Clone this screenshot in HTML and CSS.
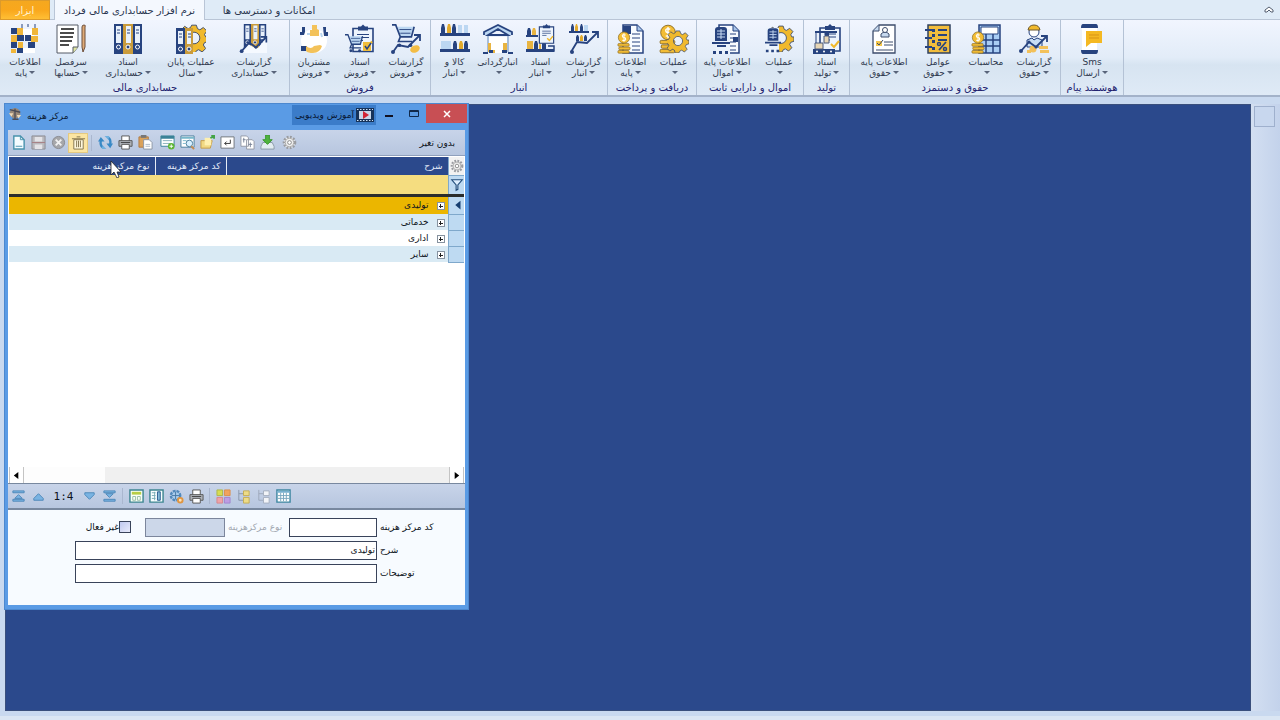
FILE: index.html
```
<!DOCTYPE html>
<html lang="fa">
<head>
    <meta charset="UTF-8">
    <meta name="viewport" content="width=device-width, initial-scale=1.0">
    <title>نرم افزار حسابداری مالی فرداد</title>
    <link rel="stylesheet" href="styles.css">
</head>
<body>
    <!-- shared icon parts -->
    <svg class="defs" aria-hidden="true">
        <symbol id="binders" viewBox="0 0 28 30">
            <path fill="#27437f" d="M0 0h9v30H0zM19 0h9v30h-9z"/><path fill="#c99b3c" d="M9 0h10v30H9z"/>
            <path fill="#e9f1fb" d="M2 2h5v17H2zM12 2h5v17h-5zM21 2h5v17h-5z"/>
            <path stroke="#27437f" d="M3 6h3M3 9h3M13 6h3M13 9h3M22 6h3M22 9h3"/>
            <g fill="#27437f" stroke="#fff"><circle cx="4.500" cy="23" r="2"/><circle cx="14" cy="23" r="2"/><circle cx="23.500" cy="23" r="2"/></g>
        </symbol>
        <symbol id="gear" viewBox="0 0 24 24">
            <path fill="#f0b92c" stroke="#3b4a6b" stroke-width=".8" fill-rule="evenodd" d="M10 1h4l1 3 2 1 3-2 3 3-2 3 1 2 2 0v4l-3 1-1 2 2 3-3 3-3-2-2 1-1 2h-4l-1-3-2-1-3 2-3-3 2-3-1-2-2 0v-4l3-1 1-2-2-3 3-3 3 2 2-1zM12 7a5 5 0 1 0 0 10a5 5 0 1 0 0-10z"/>
        </symbol>
        <symbol id="doc" viewBox="0 0 22 30">
            <path fill="#f8fbff" stroke="#27437f" stroke-width="1.500" d="M1 1h14l6 6v22H1z"/><path fill="#a9c5ea" stroke="#27437f" d="M15 1v6h6"/>
            <path stroke="#27437f" stroke-width="1.200" d="M10 10h8M10 14h8M10 18h8M10 22h8M10 26h8"/>
        </symbol>
        <symbol id="clip" viewBox="0 0 22 28">
            <path fill="#eef5fd" stroke="#27437f" stroke-width="1.600" d="M1 4h20v23H1z"/><path fill="#27437f" d="M6 2h3l2-2 2 2h3v4H6z"/>
            <path stroke="#f0b92c" stroke-width="2" fill="none" d="M12 20l3 3 5-6"/>
            <path stroke="#27437f" d="M5 10h12M5 13h12M5 16h6"/>
        </symbol>
        <symbol id="cart" viewBox="0 0 26 26">
            <path fill="#bcd7f2" d="M6 3h17l-3 11H9z"/>
            <path fill="none" stroke="#27437f" stroke-width="1.800" d="M0 1h4l5 13h12l3-11M9 14l-2 5h15"/><path stroke="#27437f" d="M8 6h13M9 10h11"/>
            <g fill="#27437f"><circle cx="8" cy="23" r="2"/><circle cx="20" cy="23" r="2"/></g>
        </symbol>
        <symbol id="coin" viewBox="0 0 16 30">
            <g fill="#f3bd35" stroke="#8a6a20" stroke-width=".8"><rect x="1" y="26" width="13" height="3" rx="1"/><rect x="2" y="22" width="13" height="3" rx="1"/><rect x="1" y="18" width="13" height="3" rx="1"/><circle cx="8" cy="11" r="6.500"/></g>
            <path fill="none" stroke="#fff" stroke-width="1.200" d="M10 8q-4-1-4 1t2 2 2 2-4 1M8 6v10"/>
        </symbol>
        <symbol id="arrow" viewBox="0 0 30 20">
            <path fill="none" stroke="#27437f" stroke-width="1.800" d="M2 17l8-9 7 5 11-11M22 2h6v6"/><circle cx="2" cy="17" r="2" fill="#27437f"/><circle cx="10" cy="8" r="1.500" fill="#27437f"/><circle cx="17" cy="13" r="1.500" fill="#27437f"/>
        </symbol>
        <symbol id="hat" viewBox="0 0 18 30">
            <path fill="#27437f" d="M3 17V6q0-3 3-3h6q3 0 3 3v11zM0 18h18v2H0zM5 21h9v2H5zM1 27h3v3H1zM7 27h3v3H7zM13 27h3v3h-3z"/><path stroke="#c7daf3" fill="none" d="M5 7h8M5 10h8M5 13h8M9 5v10"/>
        </symbol>
        <symbol id="cog" viewBox="0 0 16 16">
            <circle cx="8" cy="8" r="6" fill="#e8e8e8" stroke="#9a9ca1" stroke-width="2.500" stroke-dasharray="2 1.500"/><circle cx="8" cy="8" r="4.500" fill="#eee" stroke="#aaa"/><circle cx="8" cy="8" r="2" fill="#fff" stroke="#888"/>
        </symbol>
        <symbol id="printer" viewBox="0 0 16 16">
            <path fill="#fff" stroke="#555" d="M4 1h8v6H4z"/><path fill="#aeb2b8" stroke="#555" d="M1 6h14v6H1z"/><path fill="#fff" stroke="#555" d="M4 10h8v5H4z"/><path stroke="#444" d="M3 8h10"/>
        </symbol>
    </svg>

    <header class="ribbon">
        <nav class="tabs">
            <button class="tab tab-tools">ابزار</button>
            <button class="tab tab-active">نرم افزار حسابداری مالی فرداد</button>
            <button class="tab tab-access">امکانات و دسترسی ها</button>
            <button class="collapse" aria-label="بستن نوار"><svg viewBox="0 0 10 8"><path fill="#fff" stroke="#555f70" d="M1 4l4-3 4 3v2H7L5 4 3 6H1z"/></svg></button>
        </nav>

        <div class="groups">
            <section class="group first">
                <div class="items">
                    <button class="cmd small"><svg viewBox="0 0 30 30"><path fill="#fff" d="M12 5h12v8H12zM12 24h13v5H12z"/><g fill="#27437f"><path d="M1 4h6v6H1zM7 11h7v6H7zM1 18h6v6H1zM18 18h7v6h-7zM15 11h6v6h-6zM7 24h6v5H7z"/></g><g fill="#f0b63a"><path d="M7 4h6v7H7zM1 11h6v7H1zM22 4h6v7h-6zM21 12h7v6h-7zM8 18h5v6H8zM1 25h5v4H1z"/></g><path stroke="#27437f" d="M12 0v4M18 0v3M25 0v4"/></svg><span>اطلاعات</span><span class="drop">پایه</span></button>
                    <button class="cmd small"><svg viewBox="0 0 30 30"><path fill="#fff" stroke="#555b66" d="M1 1h21v22l-5 6H1z"/><path fill="#dfe5a0" stroke="#555b66" d="M17 29v-6h5"/><path stroke="#111" stroke-width="1.500" d="M5 5h13M4 9h14M4 13h13M4 17h12M4 21h9"/><path fill="#dfaa76" stroke="#6c4e3a" d="M26 3q0-2 2-2t1 2v20l-2 5-1-5z"/></svg><span>سرفصل</span><span class="drop">حسابها</span></button>
                    <button class="cmd large"><svg viewBox="0 0 30 30"><use href="#binders" x="1" width="28" height="30"/></svg><span>اسناد</span><span class="drop">حسابداری</span></button>
                    <button class="cmd medium"><svg viewBox="0 0 30 30"><use href="#gear" x="4" y="0" width="28" height="28"/><path fill="#27437f" d="M0 4h17v26H0z"/><path fill="#c99b3c" d="M9 4h8v26H9z"/><path fill="#e9f1fb" d="M2 7h5v13H2zM11 7h4v13h-4z"/><path stroke="#27437f" d="M3 10h3M3 13h3M12 10h3M12 13h3"/><g fill="#27437f" stroke="#fff"><circle cx="4.500" cy="25" r="2"/><circle cx="13" cy="25" r="2"/></g></svg><span>عملیات پایان</span><span class="drop">سال</span></button>
                    <button class="cmd large"><svg viewBox="0 0 30 30"><use href="#binders" x="4" width="24" height="24"/><path fill="#f5f9ff" d="M2 29l7-9 9 5 10-12v16z"/><use href="#arrow" x="0" y="11" width="30" height="19"/></svg><span>گزارشات</span><span class="drop">حسابداری</span></button>
                </div>
                <h2>حسابداری مالی</h2>
            </section>
            <section class="group">
                <div class="items">
                    <button class="cmd small"><svg viewBox="0 0 30 30"><ellipse cx="15" cy="17" rx="13" ry="12" fill="#fff"/><path fill="#27437f" d="M3 3h3v5l-1 3H1V8h2zM24 3h3v5h2v4h-4zM2 22h6v5H2z"/><path fill="#f3c25a" d="M13 1h5v4l2 1v6h-9V6h2zM7 22q5 4 8 0l6-1 2 1q-2 7-9 7-5 0-7-2z"/><path stroke="#b9d5ef" stroke-width="2" d="M22 9l1 4M8 10l3 0"/></svg><span>مشتریان</span><span class="drop">فروش</span></button>
                    <button class="cmd small"><svg viewBox="0 0 30 30"><use href="#clip" x="7" width="22" height="29"/><use href="#cart" x="0" y="9" width="19" height="21"/><path fill="#f0bd3c" d="M18 18h8v9h-8z"/><path fill="none" stroke="#27437f" stroke-width="1.500" d="M20 22l2 3 4-6"/></svg><span>اسناد</span><span class="drop">فروش</span></button>
                    <button class="cmd small"><svg viewBox="0 0 30 30"><use href="#cart" x="0" y="0" width="26" height="24"/><path fill="none" stroke="#27437f" stroke-width="1.800" d="M2 28l5-7 10 2 12-12M23 11h6v6"/><circle cx="2" cy="28" r="2" fill="#27437f"/><ellipse cx="24" cy="25" rx="5" ry="3.500" fill="#f3bd45" transform="rotate(-25 24 25)"/></svg><span>گزارشات</span><span class="drop">فروش</span></button>
                </div>
                <h2>فروش</h2>
            </section>
            <section class="group stock">
                <div class="items">
                    <button class="cmd tiny"><svg viewBox="0 0 30 30"><g fill="#27437f"><path d="M1 9V4l1-4h2l1 4v5zM12 9V4l1-4h2l1 4v5zM0 9h30v3H0zM13 25v-5l1-3h2l1 3v5zM24 25v-5l1-3h2l1 3v5zM0 25h30v3H0z"/></g><path fill="#e2aa2c" d="M7 9V4l1-4h2l1 4v5zM19 25v-5l1-3h2l1 3v5z"/><path fill="#bcd7f2" d="M18 9V1h4v8zM24 9V1h4v8zM1 17h10v8H1z"/></svg><span>کالا و</span><span class="drop">انبار</span></button>
                    <button class="cmd tiny"><svg viewBox="0 0 30 30"><path fill="#bcd7f2" stroke="#27437f" stroke-width="1.800" d="M1 11V8l14-7 14 7v3M5 11h20L15 5z"/><path fill="#fff" d="M6 13h18v16H6z"/><path stroke="#91acd0" stroke-width="1.500" d="M5 12v16M25 12v16"/><path fill="#e8b441" d="M5 19h3v9H5zM20 19h4v8h-4zM9 26h3v3H9z"/><path fill="#27437f" d="M6 26h4v3H6zM19 26h5v3h-5zM0 28h5v2H0zM25 28h5v2h-5z"/></svg><span>انبارگردانی</span><span class="drop"></span></button>
                    <button class="cmd tiny"><svg viewBox="0 0 30 30"><g fill="#27437f"><path d="M1 11V7l1-3h2l1 3v4zM0 11h12v2H0zM8 25v-5l1-3h2l1 3v5zM16 25v-5l1-3h2l1 3v5zM0 25h28v3H0z"/></g><path fill="#e8b441" d="M6 11V7l1-3h2l1 3v4zM1 17h6v8H1zM13 25v-4l1-3 1 3v4z"/><path fill="none" stroke="#27437f" stroke-width="1.500" d="M22 22h6v5h-6"/><use href="#clip" x="12" width="17" height="20"/></svg><span>اسناد</span><span class="drop">انبار</span></button>
                    <button class="cmd tiny"><svg viewBox="0 0 30 30"><g fill="#27437f"><path d="M2 7V3l1-3h1l1 3v4zM11 7V3l1-3h1l1 3v4zM0 7h20v2H0zM7 17v-4l1-2h1l1 2v4zM15 17v-4l1-2h1l1 2v4z"/></g><path fill="#e2aa2c" d="M6 7V3l1-3h1l1 3v4zM11 17v-4l1-2h1l1 2v4z"/><path fill="#bcd7f2" d="M15 7V1h4v6z"/><path fill="none" stroke="#27437f" stroke-width="1.800" d="M2 28l6-10 10 1L29 8M23 8h6v6"/><circle cx="3" cy="28" r="2" fill="#27437f"/></svg><span>گزارشات</span><span class="drop">انبار</span></button>
                </div>
                <h2>انبار</h2>
            </section>
            <section class="group">
                <div class="items">
                    <button class="cmd tiny"><svg viewBox="0 0 30 30"><use href="#doc" x="6" width="22" height="30"/><path fill="#27437f" d="M7 2h8v8H7z"/><use href="#coin" x="1" y="4" width="14" height="26"/></svg><span>اطلاعات</span><span class="drop">پایه</span></button>
                    <button class="cmd tiny"><svg viewBox="0 0 30 30"><use href="#coin" x="0" y="-4" width="18" height="34"/><use href="#gear" x="8" y="5" width="22" height="24"/></svg><span>عملیات</span><span class="drop"></span></button>
                </div>
                <h2>دریافت و پرداخت</h2>
            </section>
            <section class="group">
                <div class="items">
                    <button class="cmd medium"><svg viewBox="0 0 30 30"><use href="#doc" x="6" width="22" height="30"/><path fill="#eaf2fb" d="M4 5h14v26H4z"/><path fill="#27437f" d="M21 13h5v5h-5z"/><use href="#hat" x="0" y="0" width="18" height="30"/></svg><span>اطلاعات پایه</span><span class="drop">اموال</span></button>
                    <button class="cmd small"><svg viewBox="0 0 30 30"><use href="#gear" x="4" y="0" width="26" height="28"/><path fill="#eaf2fb" d="M2 4h13v26H2z"/><use href="#hat" x="1" y="0" width="16" height="30"/></svg><span>عملیات</span><span class="drop"></span></button>
                </div>
                <h2>اموال و دارایی ثابت</h2>
            </section>
            <section class="group">
                <div class="items">
                    <button class="cmd tiny"><svg viewBox="0 0 30 30"><use href="#clip" x="7" width="22" height="28"/><path fill="#27437f" d="M3 7h22v2H3zM13 8h4v4h-4zM1 25h22v5H1z"/><path fill="#e7d6b5" stroke="#4a5b7c" d="M12 12h5v7h-5zM3 19h8v6H3z"/><path stroke="#27437f" d="M4 8v11"/><g fill="#fff"><circle cx="5" cy="27.500" r="1"/><circle cx="12" cy="27.500" r="1"/><circle cx="19" cy="27.500" r="1"/></g></svg><span>اسناد</span><span class="drop">تولید</span></button>
                </div>
                <h2>تولید</h2>
            </section>
            <section class="group spaced">
                <div class="items">
                    <button class="cmd medium"><svg viewBox="0 0 30 30"><path fill="#fff" stroke="#3c4c6c" stroke-width="1.300" d="M10 1h16v28H4V7z"/><path fill="#c7d9ef" stroke="#3c4c6c" d="M4 7h6V1M12 13v-3q4-4 8 0v3z"/><circle cx="16" cy="6" r="2.500" fill="#fff" stroke="#3c4c6c"/><path fill="#f5c74b" d="M7 17h6v5H7z"/><path fill="none" stroke="#3c4c6c" d="M8 19l2 2 4-5M15 18h9M15 21h9M7 26h17"/></svg><span>اطلاعات پایه</span><span class="drop">حقوق</span></button>
                    <button class="cmd small"><svg viewBox="0 0 30 30"><path fill="#f2bd3d" stroke="#31415f" stroke-width="1.500" d="M5 1h22v28H5z"/><path stroke="#27437f" stroke-width="1.800" d="M2 6h7M2 14h7M2 23h7M15 6h9M15 11h9M15 16h9M16 26l7-8"/><path fill="#27437f" d="M9 5h3v3H9zM9 10h3v3H9zM9 16h3v3H9zM9 23h3v3H9z"/><g fill="none" stroke="#27437f" stroke-width="1.500"><circle cx="16" cy="20" r="1.500"/><circle cx="22" cy="25" r="1.500"/></g></svg><span>عوامل</span><span class="drop">حقوق</span></button>
                    <button class="cmd small"><svg viewBox="0 0 30 30"><path fill="#a9cdf4" stroke="#27437f" stroke-width="1.500" d="M8 1h21v28H8z"/><path fill="#fff" stroke="#27437f" d="M10 3h17v7H10z"/><path stroke="#27437f" stroke-width="1.500" d="M15 10v19M22 10v19M9 16h20M9 22h20"/><use href="#coin" x="0" y="4" width="14" height="26"/></svg><span>محاسبات</span><span class="drop"></span></button>
                    <button class="cmd small"><svg viewBox="0 0 30 30"><circle cx="15" cy="8" r="5" fill="#fff" stroke="#27437f"/><path fill="#f0b92c" stroke="#6d5930" d="M9 6q1-5 6-5t6 5z"/><path fill="#c8def5" stroke="#27437f" d="M8 23v-7l5-2 2 2 3-2 5 2v7z"/><g fill="#f3c15a"><circle cx="14" cy="25" r="3.500"/><path d="M20 22h9v3h-9zM21 26h9v3h-9zM8 26h4v3H8z"/></g><use href="#arrow" y="10" width="30" height="20"/></svg><span>گزارشات</span><span class="drop">حقوق</span></button>
                </div>
                <h2>حقوق و دستمزد</h2>
            </section>
            <section class="group sms">
                <div class="items">
                    <button class="cmd small"><svg viewBox="0 0 30 30"><path fill="#fff" d="M5 4h15v22H5z"/><path fill="#27437f" d="M6 0h13q2 0 2 4H4q0-4 2-4zM4 26h17q0 4-2 4H6q-2 0-2-4z"/><path fill="#f4b822" d="M9 7h16v12H14l-5 4z"/><path stroke="#d99315" d="M12 11h10M12 14h10"/></svg><span>Sms</span><span class="drop">ارسال</span></button>
                </div>
                <h2>هوشمند پیام</h2>
            </section>
        </div>
    </header>

    <main class="workspace">
        <div class="desktop">
            <div class="window">
                <div class="titlebar">
                    <svg class="app-icon" viewBox="0 0 16 16"><circle cx="8" cy="7" r="6" fill="#987"/><path stroke="#4b4b55" stroke-width="1.500" d="M2 3l12 3M8 2v11M5 14h7"/><path fill="#eed9b8" d="M1 7h5l-2 4zM10 9h5l-3 4z"/></svg>
                    <h1>مرکز هزینه</h1>
                    <button class="video"><svg viewBox="0 0 18 14"><path fill="#173258" d="M0 0h18v14H0z"/><path stroke="#cfe2f8" stroke-dasharray="1.500 1.500" d="M1 1.500h16M1 12.500h16"/><path fill="#c8d6e8" d="M3 3h12v8H3z"/><path fill="#d02435" d="M7 3l6 4-6 4z"/></svg><span>آموزش ویدیویی</span></button>
                    <button class="win-btn" aria-label="کوچک"><svg viewBox="0 0 10 10"><path stroke="#112" stroke-width="2" d="M1 7h8"/></svg></button>
                    <button class="win-btn" aria-label="بزرگ"><svg viewBox="0 0 10 10"><path fill="none" stroke="#112a4c" d="M.5 1.500h9v6h-9z"/><path stroke="#112a4c" d="M0 2.500h10"/></svg></button>
                    <button class="win-btn close" aria-label="بستن"><svg viewBox="0 0 10 10"><path stroke="#fff" stroke-width="1.500" d="M2 2l6 6M8 2l-6 6"/></svg></button>
                </div>

                <div class="toolbar">
                    <button aria-label="جدید"><svg viewBox="0 0 16 16"><path fill="#f5fcff" stroke="#4992ad" stroke-width="1.500" d="M3 1h7l4 4v10H3z"/><path fill="none" stroke="#4992ad" d="M10 1v4h4M5 12h7"/></svg></button>
                    <button aria-label="ذخیره"><svg viewBox="0 0 16 16"><path fill="#b9b8bd" stroke="#8d8d94" d="M1 1h14v14H1z"/><path fill="#e4e3e7" d="M4 2h8v5H4zM4 10h8v5H4z"/><path stroke="#a57e83" d="M1 8h14"/></svg></button>
                    <button aria-label="انصراف"><svg viewBox="0 0 16 16"><circle cx="8" cy="8" r="6.500" fill="#a6a7ab" stroke="#898a90"/><path stroke="#f1f1f1" stroke-width="2" d="M5 5l6 6M11 5l-6 6"/></svg></button>
                    <button class="hot" aria-label="حذف"><svg viewBox="0 0 16 16"><path fill="#fff8dd" stroke="#81734e" d="M3 5h10v10H3z"/><path stroke="#81734e" d="M1 4h14M6 2h4M6 6v7M8 6v7M10 6v7"/></svg></button>
                    <i class="sep"></i>
                    <button aria-label="بازخوانی"><svg viewBox="0 0 16 16"><path fill="none" stroke="#3989c6" stroke-width="2.500" d="M5 13Q2 11 3 6M11 3q3 2 2 7"/><path fill="#3989c6" d="M0 7l3-5 4 5zM16 9l-3 5-4-5z"/><path fill="#6fb0de" d="M5 11l4 4H4zM11 5L7 1h5z"/></svg></button>
                    <button aria-label="چاپ"><svg viewBox="0 0 16 16"><use href="#printer"/></svg></button>
                    <button aria-label="چسباندن"><svg viewBox="0 0 16 16"><path fill="#d9a15a" stroke="#b17a43" d="M1 2h10v11H1z"/><path fill="#777" d="M3 0h6v3H3z"/><path fill="#fff" stroke="#8b95a5" d="M6 5h6l3 3v7H6z"/><path stroke="#a9b6c4" d="M8 10h5M8 12h5"/></svg></button>
                    <i class="gap"></i>
                    <button aria-label="افزودن"><svg viewBox="0 0 16 16"><path fill="#fff" stroke="#3a8298" d="M1 1h14v11H1z"/><path fill="#3a8298" d="M1 1h14v3H1z"/><path stroke="#85afba" d="M3 6h10M3 9h8"/><circle cx="12" cy="12" r="3.500" fill="#5bb432"/><path stroke="#fff" d="M10 12h4M12 10v4"/></svg></button>
                    <button aria-label="جستجو"><svg viewBox="0 0 16 16"><path fill="#fff" stroke="#497d9c" d="M1 1h14v12H1z"/><path stroke="#79b8cb" stroke-width="2" d="M1 3h14"/><path stroke="#79b8cb" d="M3 6h4M3 9h3"/><circle cx="10" cy="9" r="3.500" fill="#d8f0ff" stroke="#497d9c"/><path stroke="#c48b50" stroke-width="2" d="M12 12l3 3"/></svg></button>
                    <button aria-label="ارسال"><svg viewBox="0 0 16 16"><path fill="#f1d984" stroke="#c49c48" d="M1 6h12l-2 8H1z"/><path fill="#fff0af" d="M5 3h7v8H5z"/><path fill="none" stroke="#42a345" stroke-width="2" d="M11 3l3-1M12 1h3v3"/></svg></button>
                    <button aria-label="ورود"><svg viewBox="0 0 16 16"><path fill="#fff" stroke="#6f747b" d="M1 2h14v12H1z"/><path fill="none" stroke="#333" d="M11 5v4H5M7 7L5 9l2 2"/></svg></button>
                    <button aria-label="رونوشت"><svg viewBox="0 0 16 16"><g fill="#fff" stroke="#9399a5"><path d="M1 1h6l2 2v9H1zM7 5h6l2 2v8H7z"/></g><path stroke="#778296" d="M3 5h3M4 3v5M9 10h4M11 8v5"/></svg></button>
                    <button aria-label="دریافت"><svg viewBox="0 0 16 16"><path fill="#e3edf1" stroke="#8b9aa6" d="M3 8h10l2 4v3H1v-3z"/><path fill="#4fb33e" stroke="#37962b" d="M6 0h4v5h3l-5 5-5-5h3z"/></svg></button>
                    <i class="gap"></i>
                    <button aria-label="تنظیمات"><svg viewBox="0 0 16 16"><use href="#cog"/></svg></button>
                    <span class="state">بدون تغیر</span>
                </div>

                <div class="grid-box">
                    <table class="grid" dir="rtl">
                        <colgroup><col class="c-mark"><col class="c-desc"><col class="c-code"><col></colgroup>
                        <thead>
                            <tr>
                                <th class="mark"><svg viewBox="0 0 16 16"><use href="#cog"/></svg></th>
                                <th>شرح</th>
                                <th>کد مرکز هزینه</th>
                                <th>نوع مرکز هزینه</th>
                            </tr>
                            <tr class="filter">
                                <td class="mark"><svg viewBox="0 0 16 16"><path fill="#dceeff" stroke="#234e7b" stroke-width="1.300" d="M2 2h12L9 8v5l-2 1V8z"/></svg></td>
                                <td colspan="3"></td>
                            </tr>
                        </thead>
                        <tbody>
                            <tr class="selected"><td class="mark"><svg viewBox="0 0 16 16"><path fill="#173f70" d="M12 3v10L6 8z"/></svg></td><td colspan="3"><button class="plus" aria-label="باز کردن"></button>تولیدی</td></tr>
                            <tr class="alt"><td class="mark"></td><td colspan="3"><button class="plus" aria-label="باز کردن"></button>خدماتی</td></tr>
                            <tr><td class="mark"></td><td colspan="3"><button class="plus" aria-label="باز کردن"></button>اداری</td></tr>
                            <tr class="alt"><td class="mark"></td><td colspan="3"><button class="plus" aria-label="باز کردن"></button>سایر</td></tr>
                        </tbody>
                    </table>
                    <div class="scroll">
                        <button aria-label="چپ"><svg viewBox="0 0 10 10"><path d="M7 1v8L2 5z"/></svg></button>
                        <div class="track"><div class="thumb"></div></div>
                        <button aria-label="راست"><svg viewBox="0 0 10 10"><path d="M3 1v8l5-4z"/></svg></button>
                    </div>
                </div>

                <div class="toolbar navigator">
                    <button aria-label="اولین"><svg viewBox="0 0 16 16"><path fill="#79b3e2" stroke="#4e87b9" d="M2 2h12v2H2zM8 6l4 4H4zM2 11h12v2H2z"/></svg></button>
                    <button aria-label="قبلی"><svg viewBox="0 0 16 16"><path fill="#79b3e2" stroke="#4e87b9" d="M8 5l5 5v2H3v-2z"/></svg></button>
                    <span class="count">1:4</span>
                    <button aria-label="بعدی"><svg viewBox="0 0 16 16"><path fill="#79b3e2" stroke="#4e87b9" d="M3 4h10v2l-5 5-5-5z"/></svg></button>
                    <button aria-label="آخرین"><svg viewBox="0 0 16 16"><path fill="#79b3e2" stroke="#4e87b9" d="M2 2h12v2H2zM4 5h8L8 9zM2 11h12v2H2z"/></svg></button>
                    <i class="sep"></i>
                    <button aria-label="فرم"><svg viewBox="0 0 16 16"><path fill="#f9fff6" stroke="#3c8590" stroke-width="1.500" d="M1 1h14v13H1z"/><path fill="#b7ce45" d="M3 3h10v3H3z"/><path fill="none" stroke="#98bca5" d="M4 8h3v4H4zM9 8h3v4H9z"/></svg></button>
                    <button aria-label="ستون"><svg viewBox="0 0 16 16"><path fill="#f9ffff" stroke="#3c8590" stroke-width="1.500" d="M1 1h14v13H1z"/><path stroke="#75abb4" d="M3 4h4M3 7h4M3 10h4M6 3v9"/><path fill="#83bad7" stroke="#24578b" d="M9 3h3v9H9z"/></svg></button>
                    <button aria-label="گزینه ها"><svg viewBox="0 0 16 16"><circle cx="7" cy="7" r="5" fill="#a9ccec" stroke="#5289bb" stroke-width="2.500" stroke-dasharray="3 1"/><path stroke="#4777a4" d="M3 7h8M7 3v8"/><circle cx="12" cy="12" r="2.500" fill="#ffe3b5" stroke="#df9542" stroke-width="2"/></svg></button>
                    <button aria-label="چاپ"><svg viewBox="0 0 16 16"><use href="#printer"/></svg></button>
                    <i class="sep"></i>
                    <button aria-label="کارت"><svg viewBox="0 0 16 16"><path fill="#d7dc52" stroke="#aeb64a" d="M1 1h6v6H1z"/><path fill="#f0a35f" stroke="#dc8e4b" d="M9 1h6v6H9z"/><path fill="#efa4a8" stroke="#d6868e" d="M1 9h6v6H1z"/><path fill="#bd9ee3" stroke="#a184ce" d="M9 9h6v6H9z"/></svg></button>
                    <button aria-label="درخت"><svg viewBox="0 0 16 16"><path fill="none" stroke="#8a96aa" d="M3 1v11h5M3 5h5"/><path fill="#eddc88" stroke="#c5ad52" d="M8 2h6v5H8zM8 9h6v6H8z"/></svg></button>
                    <button aria-label="بستن درخت"><svg viewBox="0 0 16 16"><path fill="none" stroke="#9ca7ba" d="M3 1v11h5M3 5h5"/><path fill="#f2f4f8" stroke="#a5afbf" d="M8 2h6v5H8zM8 9h6v6H8z"/></svg></button>
                    <button aria-label="جدول"><svg viewBox="0 0 16 16"><path fill="#fff" stroke="#3c85a0" stroke-width="1.500" d="M1 1h14v13H1z"/><path stroke="#79b0cf" stroke-width="2" d="M1 3h14"/><path stroke="#79a5be" d="M5 4v9M8 4v9M11 4v9M2 7h12M2 10h12"/></svg></button>
                </div>

                <form class="form" dir="rtl">
                    <div class="field">
                        <label class="name" for="code">کد مرکز هزینه</label>
                        <input class="short" type="text" id="code">
                        <label class="muted" for="kind">نوع مرکزهزینه</label>
                        <input class="kind" type="text" id="kind" disabled>
                        <div class="check">
                            <input type="checkbox" id="inactive">
                            <label for="inactive">غیر فعال</label>
                        </div>
                    </div>
                    <div class="field">
                        <label class="name" for="desc">شرح</label>
                        <input class="long" type="text" id="desc" value="تولیدی">
                    </div>
                    <div class="field">
                        <label class="name" for="notes">توضیحات</label>
                        <input class="long" type="text" id="notes">
                    </div>
                </form>
                <svg class="pointer" viewBox="0 0 12 18"><path fill="#fff" stroke="#222" stroke-width=".8" d="M1 1v14l3-3 3 6 2-1-2-5h4z"/></svg>
            </div>
        </div>
        <aside class="side"><button aria-label="پنل"></button></aside>
    </main>
</body>
</html>
```
FILE: styles.css
```
* {
    box-sizing: border-box;
}

body {
    margin: 0;
    height: 100vh;
    display: flex;
    flex-direction: column;
    overflow: hidden;
    background: #c9d9ef;
    font-family: "DejaVu Sans", Tahoma, sans-serif;
    font-size: 9px;
    color: #0c1220;
}

button,
input {
    font: inherit;
    color: inherit;
    margin: 0;
    padding: 0;
    border: 0;
    background: none;
}

h1,
h2 {
    margin: 0;
    font-size: 9px;
    font-weight: normal;
}

svg {
    display: block;
}

.defs {
    position: absolute;
    width: 0;
    height: 0;
}

/* Ribbon */
.tabs {
    display: flex;
    height: 20px;
    background: #dfebf7;
    border-bottom: 1px solid #b9c5d6;
}

.tab {
    height: 20px;
    direction: rtl;
    font-size: 10px;
    color: #2a3650;
    white-space: nowrap;
}

.tab-tools {
    width: 50px;
    color: #fff3cf;
    background: linear-gradient(#f5a81f, #f9a71c 50%, #ffbf35);
    border: 1px solid #dc9a2b;
}

.tab-active {
    width: 151px;
    margin-left: 4px;
    background: #f4f8fe;
    border: 1px solid #b9c5d6;
    border-width: 0 1px;
}

.tab-access {
    width: 128px;
}

.collapse {
    width: 22px;
    margin-left: auto;
}

.collapse svg {
    width: 10px;
    height: 8px;
    margin: auto;
}

.groups {
    display: flex;
    height: 77px;
    background: linear-gradient(#f1f5fe, #e2ecf8 50%, #d7e4f1 60%, #dfeaf6);
    border-bottom: 2px solid #a3b2c9;
}

.group {
    display: flex;
    flex-direction: column;
    padding: 4px 1px 0;
    border-right: 1px solid #b4c2d5;
}

.first {
    padding-left: 2px;
}

.stock {
    padding-left: 2px;
    padding-right: 2px;
}

.items {
    display: flex;
    flex: 1;
    justify-content: center;
}

.spaced .items {
    gap: 2px;
    padding: 0 2px 0 4px;
}

.sms {
    width: 63px;
}

.group h2 {
    height: 15px;
    line-height: 15px;
    direction: rtl;
    text-align: center;
    white-space: nowrap;
    font-size: 10px;
    color: #22226f;
}

.cmd {
    display: flex;
    flex-direction: column;
    align-items: center;
    direction: rtl;
    line-height: 11px;
    white-space: nowrap;
    color: #2f394e;
}

.cmd svg {
    width: 30px;
    height: 30px;
    margin-bottom: 3px;
}

.cmd.tiny { width: 43px; }
.cmd.small { width: 46px; }
.cmd.medium { width: 58px; }
.cmd.large { width: 68px; }

.drop::before {
    content: "";
    display: inline-block;
    margin-left: 2px;
    vertical-align: 2px;
    border: 3px solid transparent;
    border-top-color: #59647a;
    border-bottom: 0;
}

/* Work area */
.workspace {
    flex: 1;
    display: flex;
    padding: 7px 0 5px 5px;
    border-bottom: 4px solid #dbe6f3;
}

.desktop {
    flex: 1;
    position: relative;
    background: #2b498c;
    border: 1px solid #3a4f7c;
}

.side {
    width: 29px;
    padding: 2px 3px;
    background: linear-gradient(90deg, #d3dff1, #c3d2eb);
}

.side button {
    display: block;
    width: 21px;
    height: 21px;
    border: 1px solid #9fb0cd;
    background: #c8d7ee;
}

/* Window */
.window {
    position: absolute;
    left: -2px;
    top: -2px;
    width: 465px;
    padding: 0 3px 4px;
    background: #5a9be5;
    border: 1px solid #4c88cf;
}

.titlebar {
    display: flex;
    align-items: flex-start;
    height: 26px;
    margin-right: -2px;
}

.app-icon {
    width: 14px;
    height: 14px;
    margin-top: 3px;
}

.titlebar h1 {
    flex: 1;
    padding-left: 5px;
    direction: rtl;
    text-align: left;
    line-height: 24px;
    color: #0b1b36;
}

.video {
    display: flex;
    align-items: center;
    gap: 2px;
    width: 84px;
    height: 20px;
    margin-top: 1px;
    padding: 0 2px;
    direction: rtl;
    white-space: nowrap;
    background: #3b7cc9;
    color: #081632;
}

.video svg {
    width: 18px;
    height: 14px;
    flex: none;
}

.win-btn {
    width: 25px;
    height: 19px;
}

.win-btn svg {
    width: 10px;
    height: 10px;
    margin: auto;
}

.close {
    width: 41px;
    background: #c84f54;
}

.toolbar {
    display: flex;
    align-items: center;
    height: 25px;
    background: linear-gradient(#c8d4e9, #b7c6df);
}

.toolbar button {
    width: 20px;
    height: 20px;
}

.toolbar svg {
    width: 15px;
    height: 15px;
    margin: auto;
}

.toolbar .hot {
    background: #fbe5a2;
    border: 1px solid #e4c981;
}

.sep {
    width: 1px;
    height: 16px;
    margin: 0 3px;
    background: #aab7cf;
}

.gap {
    width: 2px;
}

.state {
    margin-left: auto;
    padding-right: 10px;
    direction: rtl;
}

/* Data grid */
.grid-box {
    display: flex;
    flex-direction: column;
    height: 328px;
    padding: 1px 1px 0;
    background: #fff;
    border-top: 1px solid #8fa0bc;
}

.grid {
    width: 100%;
    table-layout: fixed;
    border-collapse: collapse;
}

.c-mark { width: 16px; }
.c-desc { width: 222px; }
.c-code { width: 71px; }

.grid th,
.grid td {
    height: 16px;
    padding: 0 5px;
    line-height: 14px;
    text-align: right;
    font-weight: normal;
}

.grid th {
    height: 18px;
    color: #e4ecfa;
    background: #2b498c;
    border-left: 1px solid #e6ecf5;
}

.grid th:last-child {
    border-left: 0;
}

.grid .filter td {
    height: 20px;
    background: #f5dd80;
    border-bottom: 3px solid #2b2d2c;
}

.grid tbody td {
    padding: 0 3px;
}

.grid .selected td {
    height: 19px;
}

.grid .mark,
.grid .filter .mark {
    padding: 0;
    background: #bedaf2;
    border: 1px solid #7fa8cb;
    border-width: 0 0 1px 1px;
}

.grid th.mark {
    background: #f2f2f2;
}

.grid .filter .mark {
    border-bottom: 3px solid #2b2d2c;
}

.mark svg {
    width: 14px;
    height: 14px;
}

.alt td {
    background: #d9eaf4;
}

.selected td {
    background: #ebb600;
}

.plus {
    display: inline-block;
    width: 8px;
    height: 8px;
    margin-left: 8px;
    vertical-align: -1px;
    border: 1px solid #8793a0;
    background: linear-gradient(#222, #222) center / 4px 1px no-repeat,
        linear-gradient(#222, #222) center / 1px 4px no-repeat, #fff;
}

.scroll {
    display: flex;
    height: 16px;
    margin-top: auto;
    background: #f0f0f0;
}

.scroll button {
    width: 15px;
    background: #fff;
    border: 1px solid #c4c4c4;
    border-width: 0 1px;
}

.scroll svg {
    width: 9px;
    height: 9px;
    margin: auto;
}

.track {
    flex: 1;
}

.thumb {
    width: 19%;
    height: 100%;
    background: #fdfdfd;
}

.navigator {
    height: 27px;
    border: 1px solid #78889f;
    border-width: 1px 0 2px;
}

.count {
    width: 31px;
    text-align: center;
    font-family: "DejaVu Sans Mono", monospace;
    font-size: 11px;
}

/* Form */
.form {
    display: flex;
    flex-direction: column;
    gap: 5px;
    height: 95px;
    padding: 8px 26px 0 0;
    background: #f7fbff;
}

.field {
    display: flex;
    align-items: center;
    height: 18px;
}

.name {
    width: 62px;
    padding-left: 3px;
    text-align: left;
}

.field input[type="text"] {
    height: 19px;
    padding: 0 1px;
    background: #fff;
    border: 1px solid #39435a;
}

.field .short {
    width: 88px;
}

.field .long {
    width: 302px;
}

.field .kind {
    width: 80px;
    margin-right: 3px;
}

.field input[type="text"]:disabled {
    background: #ccd7e9;
    border-color: #7c869c;
}

.muted {
    width: 61px;
    text-align: left;
    color: #a2a8b1;
}

.check {
    display: flex;
    align-items: center;
    margin-right: 14px;
}

.check input {
    appearance: none;
    width: 12px;
    height: 12px;
    border: 1px solid #39435a;
    background: linear-gradient(135deg, #c0c9ef, #e8ebfb);
}

.pointer {
    position: absolute;
    left: 105px;
    top: 56px;
    width: 12px;
    height: 18px;
}
```
